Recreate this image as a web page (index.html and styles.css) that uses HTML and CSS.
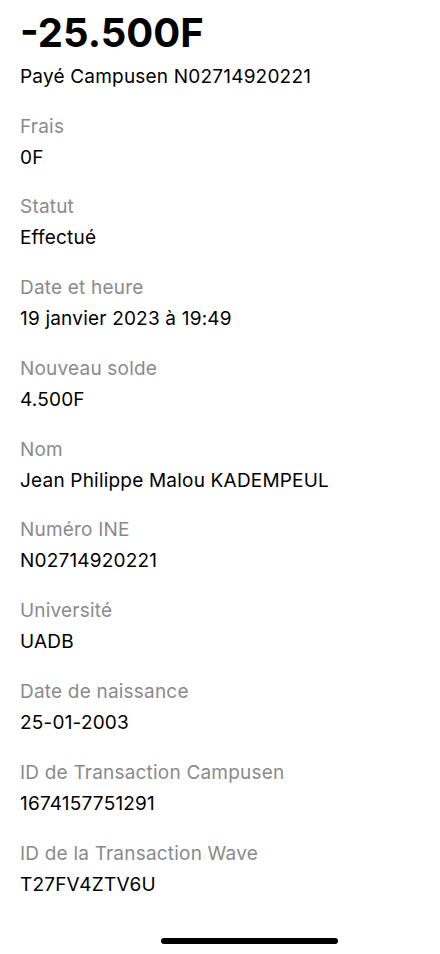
FILE: index.html
```html
<!DOCTYPE html>
<html lang="fr">
<head>
<meta charset="utf-8">
<title>Transaction</title>
<link rel="stylesheet" href="styles.css">
</head>
<body>
<main class="page">
  <header class="head">
    <h1 class="amount">-25.500F</h1>
    <p class="subtitle">Payé Campusen N02714920221</p>
  </header>
  <dl class="details">
    <div class="item"><dt>Frais</dt><dd>0F</dd></div>
    <div class="item"><dt>Statut</dt><dd>Effectué</dd></div>
    <div class="item"><dt>Date et heure</dt><dd>19 janvier 2023 à 19:49</dd></div>
    <div class="item"><dt>Nouveau solde</dt><dd>4.500F</dd></div>
    <div class="item"><dt>Nom</dt><dd>Jean Philippe Malou KADEMPEUL</dd></div>
    <div class="item"><dt>Numéro INE</dt><dd>N02714920221</dd></div>
    <div class="item"><dt>Université</dt><dd>UADB</dd></div>
    <div class="item"><dt>Date de naissance</dt><dd>25-01-2003</dd></div>
    <div class="item"><dt>ID de Transaction Campusen</dt><dd>1674157751291</dd></div>
    <div class="item"><dt>ID de la Transaction Wave</dt><dd>T27FV4ZTV6U</dd></div>
  </dl>
  <div class="home-bar"><span class="home-indicator"></span></div>
</main>
</body>
</html>
```

FILE: styles.css
```css
html, body {
  margin: 0;
  padding: 0;
  background: #ffffff;
}
body {
  font-family: Inter, "Liberation Sans", Arial, sans-serif;
  color: #000000;
  width: 440px;
  height: 954px;
  overflow: hidden;
}
.page {
  padding: 8px 20px 0;
  display: flex;
  flex-direction: column;
  height: 946px;
}
.head {
  margin: 0 0 19px;
}
.amount {
  margin: 0;
  font-size: 40px;
  font-weight: 700;
  line-height: 50px;
  letter-spacing: 0;
}
.subtitle {
  margin: 2.5px 0 0;
  font-size: 19px;
  line-height: 31px;
  letter-spacing: 0.2px;
}
.details {
  margin: 0;
}
.item {
  margin-bottom: 18.8px;
}
.item dt {
  font-size: 19px;
  line-height: 31px;
  color: #8a8a8e;
  letter-spacing: 0.2px;
}
.item dd {
  margin: 0;
  font-size: 19px;
  line-height: 31px;
  letter-spacing: 0.2px;
}
.home-bar {
  margin-top: auto;
  height: 16px;
  display: flex;
  justify-content: flex-start;
  padding-left: 141px;
}
.home-indicator {
  display: block;
  width: 177px;
  height: 6px;
  border-radius: 3px;
  background: #000;
}
```
